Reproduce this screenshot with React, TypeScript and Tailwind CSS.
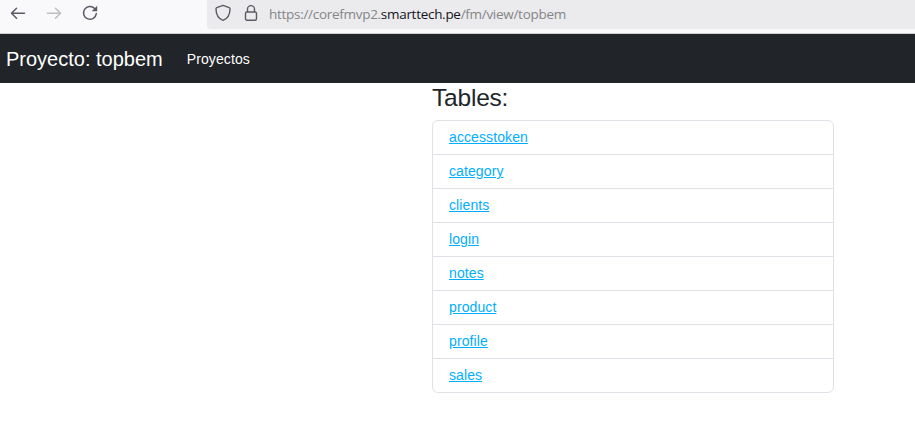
const tables = ['accesstoken', 'category', 'clients', 'login', 'notes', 'product', 'profile', 'sales'];

function BrowserBar() {
  return (
    <div className="flex h-[34px] items-start border-b border-[#cccccc] bg-[#f9f9fb]">
      <div className="flex w-[207px] shrink-0 gap-5 pt-[5px] pl-[10px]">
        <svg width="16" height="16" viewBox="0 0 16 16" fill="none" stroke="#5b5b66" strokeWidth="1.5" strokeLinecap="round" strokeLinejoin="round">
          <path d="M14.5 8.300H1.800M6.500 3.300l-5 5 5 5" />
        </svg>
        <svg width="16" height="16" viewBox="0 0 16 16" fill="none" stroke="#bdbdc1" strokeWidth="1.5" strokeLinecap="round" strokeLinejoin="round">
          <path d="M1.500 8.300h12.700M9.500 3.300l5 5-5 5" />
        </svg>
        <svg width="16" height="16" viewBox="0 0 16 16" fill="none" stroke="#5b5b66" strokeWidth="1.5" strokeLinecap="round">
          <path d="M12.600 3.500A6.400 6.400 0 1 0 14.300 8.600" />
          <path d="M15.200.8v5.500H9.700z" fill="#5b5b66" stroke="none" />
        </svg>
      </div>
      <div className="flex h-[29px] flex-1 items-start rounded-bl bg-[#ebebed] pl-2">
        <svg width="16" height="18" viewBox="0 0 16 18" fill="none" stroke="#5b5b66" strokeWidth="1.4" strokeLinejoin="round" className="mt-1">
          <path d="M8 1.400 1.800 3.600Q1 3.900 1 4.800C1 10.600 3.300 14.600 8 16.400c4.700-1.800 7-5.800 7-11.600q0-.9-.8-1.200z" />
        </svg>
        <svg width="14" height="18" viewBox="0 0 14 18" fill="none" stroke="#5b5b66" strokeWidth="1.4" className="mt-1 ml-[13px]">
          <rect x="1.500" y="8" width="11" height="8.300" rx="1.500" />
          <path d="M3.500 8V5.100a3.500 3.500 0 0 1 7 0V8" />
        </svg>
        <div className="ml-[11px] pt-1 font-['Open_Sans','Noto_Sans',sans-serif] text-[13.5px] leading-5 tracking-[-0.29px] whitespace-nowrap text-[#858587]">
          https://corefmvp2.<span className="text-[#15141a]">smarttech.pe</span>/fm/view/topbem
        </div>
      </div>
    </div>
  );
}

export default function App() {
  return (
    <div className="h-[435px] overflow-hidden bg-white font-['Liberation_Sans',Arial,sans-serif] text-sm text-[#212529]">
      <BrowserBar />
      <nav className="flex h-[49px] items-center bg-[#212529] pl-1.5 text-white">
        <a href="#" className="text-xl leading-[30px]">Proyecto: topbem</a>
        <a href="#" className="ml-6 pt-px leading-[21px] tracking-[0.1px]">Proyectos</a>
      </nav>
      <main className="ml-[432px] w-[402px]">
        <h3 className="mb-[7px] text-[24.5px] leading-[30px] tracking-[-0.2px]">Tables:</h3>
        <ul className="divide-y divide-[#dee2e6] overflow-hidden rounded-md border border-[#dee2e6]">
          {tables.map((name) => (
            <li key={name} className="flex h-[34px] items-center px-4 last:h-[33px]">
              <a href="#" className="leading-[21px] tracking-[0.1px] text-[#00aeff] underline">{name}</a>
            </li>
          ))}
        </ul>
      </main>
    </div>
  );
}
